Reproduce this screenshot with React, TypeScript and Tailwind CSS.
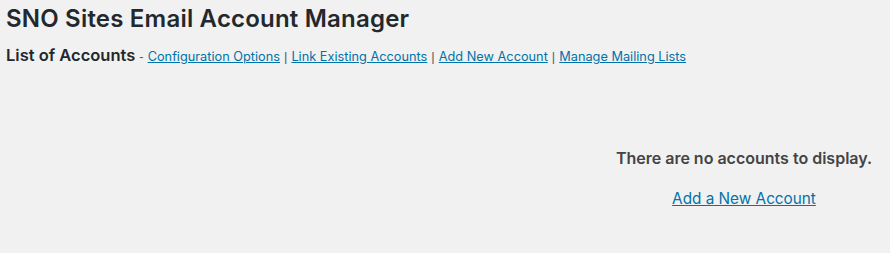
export default function App() {
  const font = { fontFamily: 'Inter, "Liberation Sans", Arial, sans-serif' };
  const sep = { fontFamily: '"Liberation Sans", Arial, sans-serif' };
  return (
    <div className="w-[890px] h-[253px] bg-[#f1f1f1] overflow-hidden" style={font}>
      <div className="pl-[6px] pt-[4px]">
        <h1 className="text-[24px] leading-[30px] font-semibold tracking-[0.2px] text-[#23282d]">SNO Sites Email Account Manager</h1>
        <div className="mt-[9px] flex items-baseline text-[#23282d]">
          <span className="text-[16.5px] font-semibold">List of Accounts</span>
          <span className="text-[13px] text-[#555d66] ml-[4px] mr-[4px]" style={sep}>-</span>
          <a href="#" className="text-[12.75px] text-[#0073aa] underline">Configuration Options</a>
          <span className="text-[13px] text-[#555d66] mx-[4px]" style={sep}>|</span>
          <a href="#" className="text-[12.75px] text-[#0073aa] underline">Link Existing Accounts</a>
          <span className="text-[13px] text-[#555d66] mx-[4px]" style={sep}>|</span>
          <a href="#" className="text-[12.75px] text-[#0073aa] underline">Add New Account</a>
          <span className="text-[13px] text-[#555d66] mx-[4px]" style={sep}>|</span>
          <a href="#" className="text-[12.75px] text-[#0073aa] underline">Manage Mailing Lists</a>
        </div>
      </div>
      <div className="flex justify-end mt-[79px]">
        <div className="w-[292px] flex flex-col items-center text-center">
          <p className="text-[16px] leading-[22px] font-semibold text-[#444]">There are no accounts to display.</p>
          <a href="#" className="mt-[19px] text-[15.3px] text-[#0073aa] underline">Add a New Account</a>
        </div>
      </div>
    </div>
  );
}
